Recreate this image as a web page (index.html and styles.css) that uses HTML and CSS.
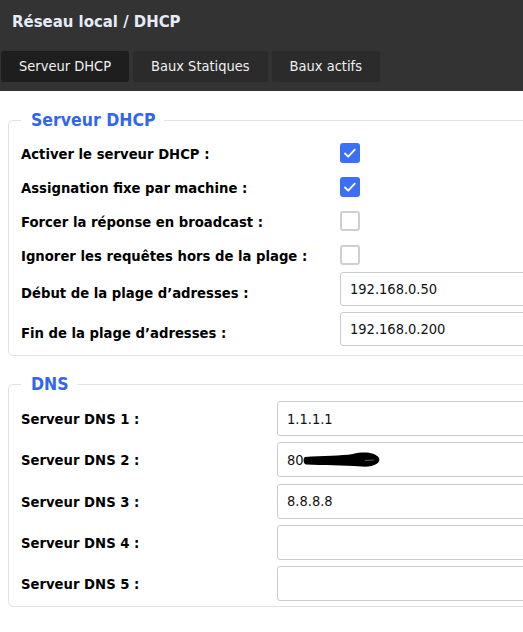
FILE: index.html
```html
<!DOCTYPE html>
<html lang="fr">
<head>
<meta charset="utf-8">
<title>Réseau local / DHCP</title>
<link rel="stylesheet" href="styles.css">
</head>
<body>
<header class="topbar">
  <h1 class="title">Réseau local / DHCP</h1>
  <nav class="tabs">
    <span class="tab active">Serveur DHCP</span>
    <span class="tab">Baux Statiques</span>
    <span class="tab">Baux actifs</span>
  </nav>
</header>
<main class="content">
  <fieldset class="group group-dhcp">
    <legend class="legend">Serveur DHCP</legend>
    <div class="form form-dhcp">
      <label class="lbl">Activer le serveur DHCP :</label>
      <span class="cb checked"><svg viewBox="0 0 20 20" width="20" height="20"><path d="M5 10.5l3.2 3.2 6.6-7" fill="none" stroke="#fff" stroke-width="1.8" stroke-linecap="round" stroke-linejoin="round"/></svg></span>
      <label class="lbl">Assignation fixe par machine :</label>
      <span class="cb checked"><svg viewBox="0 0 20 20" width="20" height="20"><path d="M5 10.5l3.2 3.2 6.6-7" fill="none" stroke="#fff" stroke-width="1.8" stroke-linecap="round" stroke-linejoin="round"/></svg></span>
      <label class="lbl">Forcer la réponse en broadcast :</label>
      <span class="cb"></span>
      <label class="lbl">Ignorer les requêtes hors de la plage :</label>
      <span class="cb"></span>
      <label class="lbl">Début de la plage d’adresses :</label>
      <input class="field" type="text" value="192.168.0.50">
      <label class="lbl">Fin de la plage d’adresses :</label>
      <input class="field" type="text" value="192.168.0.200">
    </div>
  </fieldset>
  <fieldset class="group group-dns">
    <legend class="legend">DNS</legend>
    <div class="form form-dns">
      <label class="lbl">Serveur DNS 1 :</label>
      <input class="field tall" type="text" value="1.1.1.1">
      <label class="lbl">Serveur DNS 2 :</label>
      <div class="field tall masked"><span>80</span><svg class="blot" viewBox="0 0 78 18" width="78" height="18"><path d="M2 6 C 20 4.5, 38 5, 50 3 C 60 0.5, 72 1, 76 7 C 78 12, 71 16.5, 58 15.5 C 40 14, 20 14.5, 3 13.5 C 0 12.5, 0 7, 2 6 Z" fill="#000"/><path d="M62 9.5 L 71 9" stroke="#777" stroke-width="0.8"/></svg></div>
      <label class="lbl">Serveur DNS 3 :</label>
      <input class="field tall" type="text" value="8.8.8.8">
      <label class="lbl">Serveur DNS 4 :</label>
      <input class="field tall" type="text" value="">
      <label class="lbl">Serveur DNS 5 :</label>
      <input class="field tall" type="text" value="">
    </div>
  </fieldset>
</main>
</body>
</html>
```
FILE: styles.css
```css
html, body {
  margin: 0;
  padding: 0;
  overflow: hidden;
  background: #fff;
  font-family: "DejaVu Sans Condensed", "DejaVu Sans", sans-serif;
  color: #000;
}
.topbar {
  background: #333333;
  padding: 12px 0 9px 0;
  height: 70px;
}
.title {
  margin: 0 0 0 12px;
  font-size: 16.6px;
  font-weight: bold;
  color: #e6ecf5;
  line-height: 20px;
}
.tabs {
  display: flex;
  gap: 4px;
  margin: 19px 0 0 1px;
}
.tab {
  background: #2b2b2b;
  color: #f0f0f0;
  font-size: 14.5px;
  height: 31px;
  line-height: 31px;
  padding: 0 18px;
  border-radius: 3px;
}
.tab.active {
  background: #1e1e1e;
}
.content {
  padding: 19px 0 0 8px;
}
.group {
  width: 600px;
  margin: 0 0 18px 0;
  border: 1px solid #e2e2e2;
  border-radius: 5px;
  padding: 0 0 0 12px;
}
.group-dhcp { padding-bottom: 3px; }
.group-dns { padding-bottom: 5px; }
.legend {
  font-size: 17.5px;
  font-weight: bold;
  color: #3366ee;
  padding: 0 8px 0 10px;
  margin-left: 0;
}
.form {
  display: grid;
  align-items: center;
}
.form-dhcp {
  grid-template-columns: 319px 1fr;
  padding-top: 6px;
}
.form-dns {
  grid-template-columns: 256px 1fr;
  row-gap: 6.3px;
  padding-top: 7px;
}
.lbl {
  font-size: 14.7px;
  font-weight: bold;
}
.cb {
  width: 20px;
  height: 20px;
  margin: 7px 0;
  border: 2px solid #cfcfcf;
  border-radius: 3px;
  box-sizing: border-box;
  display: block;
}
.cb.checked {
  background: #3b6ff6;
  border: 0;
}
.cb svg { display: block; }
.field {
  box-sizing: border-box;
  height: 34px;
  margin: 0 0 6px 0;
  border: 1px solid #cccccc;
  border-radius: 3px;
  padding: 0 9px;
  font-family: inherit;
  font-size: 14.5px;
  color: #111;
  background: #fff;
  width: 100%;
}
.field.tall { height: 35px; margin: 0; }
.masked {
  display: flex;
  align-items: center;
}
.blot {
  display: block;
  margin-left: -1px;
  margin-top: 1px;
}
```
